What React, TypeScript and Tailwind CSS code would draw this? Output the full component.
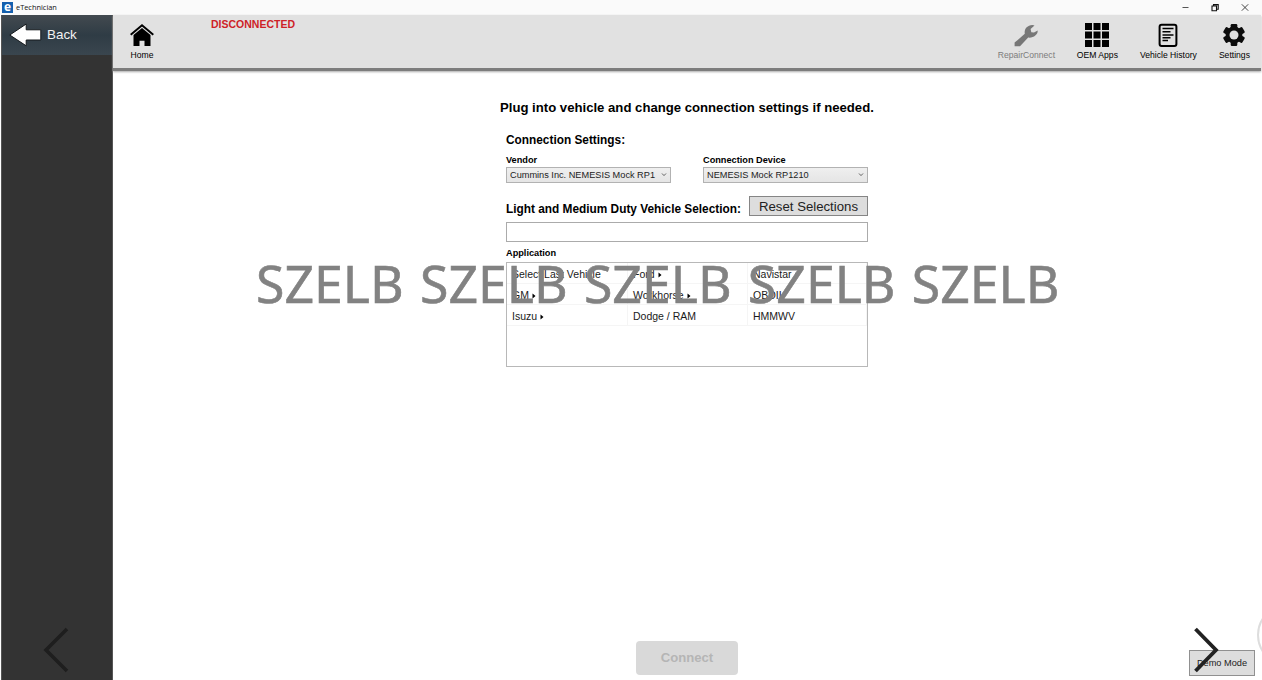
import React, { useState } from 'react';

const toolbarLabel = 'h-[12px] text-[8.6px] leading-[12px] whitespace-nowrap';

const BackButton: React.FC = () => (
  <button className="flex h-[40px] w-full items-center bg-linear-to-b from-[#434a50] via-[#2f3c45] to-[#3a464f] pl-[7px] text-[13.4px] text-[#f2f2f2]">
    <svg width="33" height="24" viewBox="0 0 33 24" className="mr-[5px]">
      <path d="M0.8 12 L17.2 1 V6.8 H31.8 V17 H17.2 V22.8 Z" fill="#fff" stroke="#15191c" strokeWidth="1" />
    </svg>
    Back
  </button>
);

const HomeIcon: React.FC = () => (
  <svg width="24" height="24" viewBox="0 0 24 24" fill="#000">
    <path d="M0.7 11.8 L12 2.2 L23.3 11.8" fill="none" stroke="#000" strokeWidth="2" />
    <path d="M12 4.9 L20.5 12 V23 H14.5 V17.8 H9.5 V23 H3.5 V12 Z" />
  </svg>
);

const WrenchIcon: React.FC = () => (
  <svg width="24" height="24" viewBox="0 0 24 24" fill="#777">
    <path d="M0.6 19.6 L10.8 10.8 C9.9 6.4 13 2.2 18.3 2 C19.3 2 20 2.2 20.5 2.6 L16.6 6 L17.3 9.2 L20 9.6 L23.7 7.4 C24 11.8 19.6 15.2 14.2 14.6 L6 23.2 H0.6 Z" />
  </svg>
);

const GridIcon: React.FC = () => (
  <svg width="24" height="24" viewBox="0 0 24 24" fill="#000">
    {[0, 8.5, 17].map((y) =>
      [0, 8.5, 17].map((x) => <rect key={`${x}-${y}`} x={x} y={y} width="7" height="7" />)
    )}
  </svg>
);

const HistoryIcon: React.FC = () => (
  <svg width="20" height="24" viewBox="0 0 20 24" fill="none" stroke="#000">
    <rect x="1.6" y="1.8" width="16.8" height="21.2" rx="2" strokeWidth="2" />
    <path d="M4.5 5.5H15.5 M4.5 8.7H12.5 M4.5 11.9H15.5 M4.5 14.7H12.5 M4.5 17.5H10" strokeWidth="1.5" />
  </svg>
);

const GearIcon: React.FC = () => (
  <svg width="24" height="24" viewBox="0 0 24 24" fill="#0c0c0c">
    {[0, 60, 120].map((angle) => (
      <rect key={angle} x="8.7" y="1" width="6.6" height="22" rx="1.2" transform={`rotate(${angle} 12 12)`} />
    ))}
    <circle cx="12" cy="12" r="8.4" />
    <circle cx="12" cy="12" r="4.5" fill="#e1e1e1" />
  </svg>
);

const tools = [
  { label: 'RepairConnect', icon: <WrenchIcon />, className: 'w-[58px] text-[#7c7c7c]' },
  { label: 'OEM Apps', icon: <GridIcon />, className: 'ml-[21px] w-[42px] text-black' },
  { label: 'Vehicle History', icon: <HistoryIcon />, className: 'ml-[21px] w-[58px] text-black' },
  { label: 'Settings', icon: <GearIcon />, className: 'ml-[21px] w-[32px] text-black' },
];

const applications = [
  { name: 'Select Last Vehicle', more: false },
  { name: 'Ford', more: true },
  { name: 'Navistar', more: true },
  { name: 'GM', more: true },
  { name: 'Workhorse', more: true },
  { name: 'OBDII', more: false },
  { name: 'Isuzu', more: true },
  { name: 'Dodge / RAM', more: false },
  { name: 'HMMWV', more: false },
];

const SelectBox: React.FC<{ label: string; value: string }> = ({ label, value }) => (
  <div className="w-[165px]">
    <div className="-mt-px mb-px h-[12px] text-[9.2px] leading-[12px] font-bold">{label}</div>
    <button className="flex h-[16px] w-full items-center border border-[#b2b2b2] bg-linear-to-b from-[#efefef] to-[#e5e5e5] pr-[3px] pl-[3px] text-left text-[9.2px] text-[#222]">
      <span className="w-[146px] overflow-hidden leading-[14px] whitespace-nowrap">{value}</span>
      <svg width="6" height="4" viewBox="0 0 6 4" className="ml-auto">
        <path d="M1 0.5 L3 2.6 L5 0.5" fill="none" stroke="#555" strokeWidth="0.9" />
      </svg>
    </button>
  </div>
);

const TitleBar: React.FC = () => (
  <div className="flex h-[15px] items-center bg-[#fafafa] pr-[13px] pl-[2px]">
    <div className="flex h-[11px] w-[11px] items-center justify-center bg-[#1560ae] text-white">
      <span className="-mt-[2px] font-['Open_Sans',sans-serif] text-[12px] leading-[11px] font-bold">e</span>
    </div>
    <span className="ml-[3px] font-['Open_Sans',sans-serif] text-[7.4px] leading-[15px] text-[#111]">eTechnician</span>
    <div className="ml-auto flex items-center gap-[22px]">
      <svg width="7" height="8" viewBox="0 0 7 8"><path d="M0.5 3.5H6.5" stroke="#555" strokeWidth="1" /></svg>
      <svg width="8" height="8" viewBox="0 0 8 8" fill="none" stroke="#111" strokeWidth="1.1">
        <path d="M1 2H5.5V6.7H1Z M2.5 2V0.6H7.2V5.2H5.5" />
      </svg>
      <svg width="8" height="8" viewBox="0 0 8 8"><path d="M0.8 0.3L7.2 6.7M7.2 0.3L0.8 6.7" stroke="#333" strokeWidth="0.9" /></svg>
    </div>
  </div>
);

export default function App() {
  const [vehicle, setVehicle] = useState('');

  return (
    <div className="relative flex h-[680px] w-[1262px] flex-col overflow-hidden bg-white font-['Liberation_Sans',Arial,sans-serif] text-black">
      <TitleBar />

      <div className="flex min-h-0 flex-1">
        <aside className="ml-px flex w-[112px] flex-col border-x border-[#555] bg-[#333]">
          <BackButton />
          <svg width="26" height="46" viewBox="0 0 26 46" className="mt-auto mb-[7px] ml-[41px]">
            <path d="M24 2 L3 23 L24 44" fill="none" stroke="#1e1e1e" strokeWidth="3.6" />
          </svg>
        </aside>

        <main className="flex flex-1 flex-col">
          <header className="mr-px flex h-[56px] shrink-0 border-b-[3px] border-[#7d7d7d] bg-[#e1e1e1] pr-[10.6px] pl-[17px] shadow-[0_1px_2px_#aaa]">
            <button className="mt-[8px] flex h-[38px] w-[24px] flex-col items-center">
              <HomeIcon />
              <span className={`${toolbarLabel} mt-[2px]`}>Home</span>
            </button>
            <span className="mt-[2px] ml-[57px] h-[14px] text-[10.5px] leading-[14px] font-bold text-[#ce2127]">DISCONNECTED</span>
            <nav className="mt-[8px] ml-auto flex">
              {tools.map((tool) => (
                <button key={tool.label} className={`flex h-[38px] flex-col items-center ${tool.className}`}>
                  {tool.icon}
                  <span className={`${toolbarLabel} mt-[2px]`}>{tool.label}</span>
                </button>
              ))}
            </nav>
          </header>

          <section className="ml-[393px] flex w-[362px] flex-1 flex-col">
            <h1 className="mt-[28px] -ml-[6px] h-[18px] text-[13.15px] leading-[18px] font-bold whitespace-nowrap">
              Plug into vehicle and change connection settings if needed.
            </h1>
            <h2 className="mt-[15px] h-[16px] text-[11.85px] leading-[16px] font-bold">Connection Settings:</h2>
            <div className="mt-[7px] flex justify-between">
              <SelectBox label="Vendor" value="Cummins Inc. NEMESIS Mock RP1" />
              <SelectBox label="Connection Device" value="NEMESIS Mock RP1210" />
            </div>

            <div className="mt-[13px] flex h-[20px] justify-between">
              <h2 className="mt-[5px] h-[16px] text-[11.85px] leading-[16px] font-bold whitespace-nowrap">
                Light and Medium Duty Vehicle Selection:
              </h2>
              <button className="h-[20px] w-[119px] border border-[#858585] bg-[#ddd] text-[13.2px] leading-[19px] whitespace-nowrap text-[#222]">
                Reset Selections
              </button>
            </div>
            <input
              value={vehicle}
              onChange={(e) => setVehicle(e.target.value)}
              className="mt-[6px] h-[20px] w-full border border-[#ababab] bg-white px-1 text-[10.5px] outline-none"
            />

            <div className="mt-[5px] h-[12px] text-[9.2px] leading-[12px] font-bold">Application</div>
            <div className="mt-[3px] h-[105px] border border-[#b8b8b8]">
              <div className="grid grid-cols-[121px_120px_119px]">
                {applications.map((app) => (
                  <button
                    key={app.name}
                    className="flex h-[21px] items-center border-r border-b border-[#f5f5f5] pt-[3px] pl-[5px] text-left text-[10.5px] whitespace-nowrap text-[#1a1a1a]"
                  >
                    {app.name}
                    {app.more && (
                      <svg width="4" height="6" viewBox="0 0 4 6" className="ml-[3px]"><path d="M0.5 0.5 L3.5 3 L0.5 5.5Z" /></svg>
                    )}
                  </button>
                ))}
              </div>
            </div>

            <button
              disabled
              className="mt-auto mb-[5px] h-[34px] w-[102px] self-center rounded-[4px] bg-[#d9d9d9] text-[13.1px] font-bold text-[#b5b5b5]"
            >
              Connect
            </button>
          </section>
        </main>
      </div>

      {/* floating controls in the lower right corner */}
      <button className="absolute top-[650px] left-[1189px] h-[26px] w-[66px] border border-[#909090] bg-[#ddd] pt-px text-[9.2px] text-[#222]">
        Demo Mode
      </button>
      <svg width="26" height="46" viewBox="0 0 26 46" className="absolute top-[627px] left-[1193px]">
        <path d="M2.5 2 L23 23 L2.5 44" fill="none" stroke="#222" strokeWidth="3.8" />
      </svg>
      <div className="absolute top-[604px] left-[1257px] h-[62px] w-[62px] rounded-full border-2 border-[#ddd]" />

      {/* watermark */}
      <div className="pointer-events-none absolute top-[247px] left-[256px] font-['Noto_Sans',sans-serif] text-[51.8px] leading-[72px] [word-spacing:2.8px] whitespace-nowrap text-[#828282] [-webkit-text-stroke:0.6px_#828282]">
        SZELB SZELB SZELB SZELB SZELB
      </div>
    </div>
  );
}
